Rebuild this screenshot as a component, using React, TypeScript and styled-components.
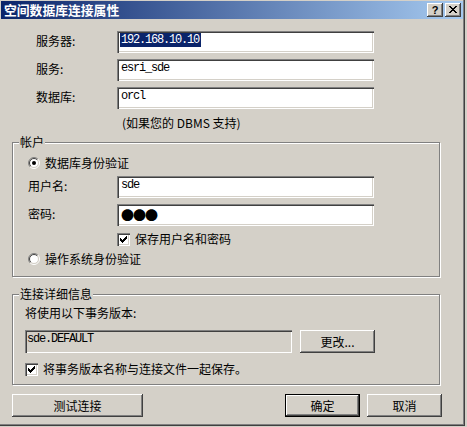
import React from "react";
import styled, { createGlobalStyle, css } from "styled-components";

const ui = `"Noto Sans CJK SC", "Liberation Sans", sans-serif`;
const mono = `"Liberation Mono", "DejaVu Sans Mono", monospace`;

const GlobalStyle = createGlobalStyle`
  html, body { margin: 0; padding: 0; background: #d4d0c8; }
  body { font-family: ${ui}; font-size: 12px; color: #000; }
  * { box-sizing: border-box; }
`;

const sunken = css`
  box-shadow: inset 1px 1px #808080, inset 2px 2px #404040, inset -1px -1px #ffffff,
    inset -2px -2px #d4d0c8;
`;

const raised = css`
  box-shadow: inset -1px -1px #404040, inset 1px 1px #ffffff, inset -2px -2px #808080,
    inset 2px 2px #d4d0c8;
`;

const Window = styled.div`
  width: 465px;
  height: 426px;
  padding: 1px 0 0 1px;
  background: #d4d0c8;
  border-right: 1px solid #404040;
  border-bottom: 1px solid #404040;
  box-shadow: inset -1px -1px #808080;
  display: flex;
  flex-direction: column;
`;

const TitleBar = styled.div`
  width: 462px;
  height: 18px;
  flex: none;
  display: flex;
  align-items: center;
  padding: 0 2px 0 3px;
  background: linear-gradient(to right, #0a246a, #a6caf0);
`;

const Title = styled.div`
  flex: 1;
  color: #fff;
  font-family: ${ui};
  font-weight: 700;
  font-size: 12.8px;
  line-height: 18px;
  white-space: nowrap;
`;

const CaptionButtons = styled.div`
  display: flex;
  gap: 2px;
`;

const CaptionButton = styled.div`
  width: 16px;
  height: 14px;
  background: #d4d0c8;
  ${raised};
  display: flex;
  align-items: center;
  justify-content: center;
  font-family: "Liberation Sans", sans-serif;
  font-weight: 700;
  font-size: 11px;
  line-height: 14px;
  padding-bottom: 1px;
`;

const Body = styled.div`
  display: flex;
  flex-direction: column;
  padding-left: 11px;
`;

const FieldGrid = styled.div<{ $labelWidth: number; $top: number; $left: number }>`
  display: grid;
  grid-template-columns: ${(p) => p.$labelWidth}px 257px;
  row-gap: 6px;
  align-items: center;
  margin-top: ${(p) => p.$top}px;
  margin-left: ${(p) => p.$left}px;
`;

const Label = styled.div`
  line-height: 16px;
  padding-bottom: 3px;
  white-space: nowrap;
`;

const TextField = styled.div`
  width: 257px;
  height: 22px;
  background: #fff;
  ${sunken};
  padding: 2px 3px 0;
  font-family: ${mono};
  font-size: 12px;
  letter-spacing: -1.2px;
  line-height: 14px;
  white-space: nowrap;
  overflow: hidden;
`;

const Value = styled.span<{ $selected?: boolean }>`
  padding: 0 2px 0 1px;
  ${(p) =>
    p.$selected &&
    css`
      background: #0a246a;
      color: #fff;
    `}
`;

const Dots = styled.span`
  font-family: ${ui};
  font-size: 13px;
  letter-spacing: -1px;
  line-height: 18px;
  padding-left: 1px;
`;

const Note = styled.div`
  grid-column: 2;
  padding-left: 5px;
  line-height: 16px;
  white-space: nowrap;
`;

const GroupBox = styled.div<{ $height: number; $top: number; $pad: string }>`
  position: relative;
  width: 428px;
  height: ${(p) => p.$height}px;
  margin-top: ${(p) => p.$top}px;
  padding: ${(p) => p.$pad};
  border: 1px solid #808080;
  box-shadow: inset 1px 1px #ffffff, 1px 1px #ffffff;
  display: flex;
  flex-direction: column;
`;

const GroupTitle = styled.div`
  position: absolute;
  top: -8px;
  left: 6px;
  padding: 0 1px;
  background: #d4d0c8;
  line-height: 14px;
  white-space: nowrap;
`;

const OptionRow = styled.label<{ $top?: number; $left?: number }>`
  display: flex;
  align-items: center;
  gap: 5px;
  height: 16px;
  margin-top: ${(p) => p.$top ?? 0}px;
  margin-left: ${(p) => p.$left ?? 0}px;
  white-space: nowrap;
  line-height: 16px;
`;

const BoxMark = styled.span`
  width: 13px;
  height: 13px;
  flex: none;
  background: #fff;
  ${sunken};
  display: flex;
  align-items: center;
  justify-content: center;
`;

const TextLine = styled.div`
  line-height: 16px;
  white-space: nowrap;
`;

const VersionRow = styled.div`
  display: flex;
  gap: 8px;
  margin-top: 9px;
`;

const ReadonlyField = styled.div`
  width: 267px;
  height: 23px;
  background: #d4d0c8;
  ${sunken};
  padding: 2px 2px 0;
  font-family: ${mono};
  font-size: 12px;
  letter-spacing: -1.2px;
  line-height: 14px;
  white-space: nowrap;
`;

const Button = styled.button<{ $width: number; $default?: boolean }>`
  width: ${(p) => p.$width}px;
  height: 23px;
  padding: 0;
  margin: 0;
  border: none;
  background: #d4d0c8;
  color: #000;
  font-family: ${ui};
  font-size: 12px;
  line-height: 16px;
  ${raised};
  ${(p) =>
    p.$default &&
    css`
      border: 1px solid #000;
    `}
`;

const ButtonRow = styled.div`
  width: 430px;
  display: flex;
  justify-content: space-between;
  margin-top: 9px;
`;

const ButtonGroup = styled.div`
  display: flex;
  gap: 7px;
`;

const pixelPath = (rows: string[]) =>
  rows
    .flatMap((r, y) =>
      r.split("").map((c, x) => (c === "X" ? `M${x} ${y}h1v1h-1z` : ""))
    )
    .join("");

const closeGlyph = pixelPath([
  "XX....XX",
  ".XX..XX.",
  "..XXXX..",
  "...XX...",
  "..XXXX..",
  ".XX..XX.",
  "XX....XX",
]);

const checkGlyph = pixelPath([
  "......X",
  ".....XX",
  "X...XXX",
  "XX.XXX.",
  "XXXXX..",
  ".XXX...",
  "..X....",
]);

const CloseIcon = () => (
  <svg width="8" height="7" viewBox="0 0 8 7" shapeRendering="crispEdges">
    <path d={closeGlyph} fill="#000" />
  </svg>
);

const CheckBox = ({ checked }: { checked: boolean }) => (
  <BoxMark>
    {checked && (
      <svg width="7" height="7" viewBox="0 0 7 7" shapeRendering="crispEdges">
        <path d={checkGlyph} fill="#000" />
      </svg>
    )}
  </BoxMark>
);

const arc = (r: number, topLeft: boolean) => {
  const k = r * Math.SQRT1_2;
  const a = { x: 6 - k, y: 6 + k };
  const b = { x: 6 + k, y: 6 - k };
  return topLeft
    ? `M${a.x} ${a.y}A${r} ${r} 0 0 1 ${b.x} ${b.y}`
    : `M${b.x} ${b.y}A${r} ${r} 0 0 1 ${a.x} ${a.y}`;
};

const Radio = ({ checked }: { checked: boolean }) => (
  <svg width="12" height="12" viewBox="0 0 12 12" style={{ flex: "none" }}>
    <circle cx="6" cy="6" r="4.5" fill="#fff" />
    <path d={arc(5.5, true)} stroke="#808080" fill="none" />
    <path d={arc(5.5, false)} stroke="#ffffff" fill="none" />
    <path d={arc(4.5, true)} stroke="#404040" fill="none" />
    <path d={arc(4.5, false)} stroke="#d4d0c8" fill="none" />
    {checked && <circle cx="6" cy="6" r="2" fill="#000" />}
  </svg>
);

export default function App() {
  return (
    <>
      <GlobalStyle />
      <Window>
        <TitleBar>
          <Title>空间数据库连接属性</Title>
          <CaptionButtons>
            <CaptionButton>?</CaptionButton>
            <CaptionButton>
              <CloseIcon />
            </CaptionButton>
          </CaptionButtons>
        </TitleBar>
        <Body>
          <FieldGrid $labelWidth={81} $top={12} $left={24}>
            <Label>服务器:</Label>
            <TextField>
              <Value $selected>192.168.10.10</Value>
            </TextField>
            <Label>服务:</Label>
            <TextField>
              <Value>esri_sde</Value>
            </TextField>
            <Label>数据库:</Label>
            <TextField>
              <Value>orcl</Value>
            </TextField>
            <Note>(如果您的 DBMS 支持)</Note>
          </FieldGrid>

          <GroupBox $height={135} $top={11} $pad="12px 0 0 15px">
            <GroupTitle>帐户</GroupTitle>
            <OptionRow>
              <Radio checked />
              数据库身份验证
            </OptionRow>
            <FieldGrid $labelWidth={89} $top={5} $left={0}>
              <Label>用户名:</Label>
              <TextField>
                <Value>sde</Value>
              </TextField>
              <Label>密码:</Label>
              <TextField>
                <Dots>●●●</Dots>
              </TextField>
            </FieldGrid>
            <OptionRow $top={5} $left={89}>
              <CheckBox checked />
              保存用户名和密码
            </OptionRow>
            <OptionRow $top={4}>
              <Radio checked={false} />
              操作系统身份验证
            </OptionRow>
          </GroupBox>

          <GroupBox $height={91} $top={17} $pad="10px 0 0 12px">
            <GroupTitle>连接详细信息</GroupTitle>
            <TextLine>将使用以下事务版本:</TextLine>
            <VersionRow>
              <ReadonlyField>sde.DEFAULT</ReadonlyField>
              <Button $width={75}>更改...</Button>
            </VersionRow>
            <OptionRow $top={8}>
              <CheckBox checked />
              将事务版本名称与连接文件一起保存。
            </OptionRow>
          </GroupBox>

          <ButtonRow>
            <Button $width={131}>测试连接</Button>
            <ButtonGroup>
              <Button $width={75} $default>
                确定
              </Button>
              <Button $width={75}>取消</Button>
            </ButtonGroup>
          </ButtonRow>
        </Body>
      </Window>
    </>
  );
}
